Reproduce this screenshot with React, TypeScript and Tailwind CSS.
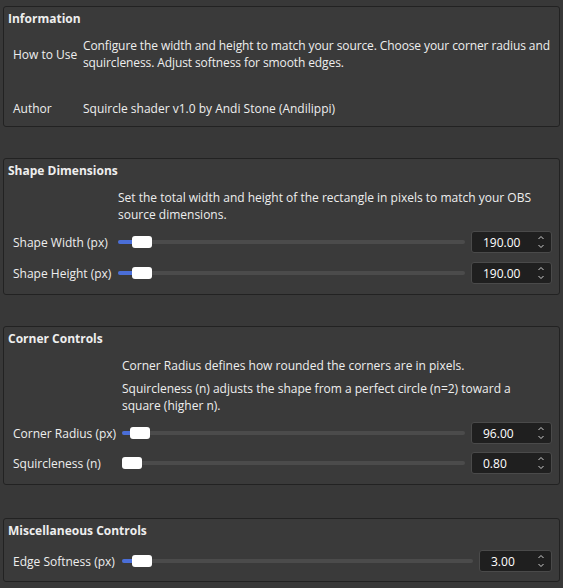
import React from "react";

function Spin({ value, w = "w-[81px]" }: { value: string; w?: string }) {
  return (
    <div className={"flex h-[22px] shrink-0 items-center justify-between rounded-[3px] border border-[#4a4a4a] bg-[#1f1f1f] pl-[11px] pr-[6px] " + w}>
      <span className="text-white">{value}</span>
      <svg width="8" height="16" viewBox="0 0 8 16" fill="none" stroke="#cfcfcf" strokeWidth="1">
        <path d="M1.5 5 L4 2.5 L6.5 5" />
        <path d="M1.5 11 L4 13.5 L6.5 11" />
      </svg>
    </div>
  );
}

function Slider({ fill }: { fill: number }) {
  return (
    <div className="relative mr-[6px] flex h-[22px] flex-1 items-center">
      <div className="h-[4px] w-full rounded-[2px] bg-[#4b4b4b]" />
      <div className="absolute left-0 top-[9px] h-[4px] rounded-l-[2px] bg-[#4a6ed8]" style={{ width: fill + 2 }} />
      <div className="absolute top-[5px] h-[12px] w-[20px] rounded-[3px] bg-white" style={{ left: fill }} />
    </div>
  );
}

function Row({ label, labelW, fill, value, spinW }: { label: string; labelW: string; fill: number; value: string; spinW?: string }) {
  return (
    <div className="flex items-center">
      <div className={labelW}>{label}</div>
      <Slider fill={fill} />
      <Spin value={value} w={spinW} />
    </div>
  );
}

function Panel({ title, className, children }: { title: string; className?: string; children: React.ReactNode }) {
  return (
    <div className={"rounded-[3px] border border-[#222222] bg-[#3a3a3a] " + (className ?? "")}>
      <div className="pl-[4px] pt-[3px] font-bold">{title}</div>
      {children}
    </div>
  );
}

export default function App() {
  return (
    <div
      className="min-h-[588px] bg-[#383838] px-[3px] pt-[6px] text-[12px] leading-[17px] text-[#eeeeee]"
      style={{ fontFamily: '"Open Sans", "Noto Sans", sans-serif' }}
    >
      <div className="flex flex-col gap-[31px]">
        <Panel title="Information" className="pb-[9px]">
          <div className="mt-[10px] flex items-center pl-[9px]">
            <div className="w-[70px] shrink-0">How to Use</div>
            <div className="whitespace-nowrap tracking-[-0.1px]">
              Configure the width and height to match your source. Choose your corner radius and
              <br />
              squircleness. Adjust softness for smooth edges.
            </div>
          </div>
          <div className="mt-[29px] flex pl-[9px]">
            <div className="w-[70px] shrink-0">Author</div>
            <div>Squircle shader v1.0 by Andi Stone (Andilippi)</div>
          </div>
        </Panel>

        <Panel title="Shape Dimensions" className="pb-[10px]">
          <div className="pl-[9px] pr-[7px]">
            <div className="mt-[10px] pl-[105px] pr-[20px]">
              Set the total width and height of the rectangle in pixels to match your OBS source dimensions.
            </div>
            <div className="mt-[8px] flex flex-col gap-[9px]">
              <Row label="Shape Width (px)" labelW="w-[105px] shrink-0" fill={14} value="190.00" />
              <Row label="Shape Height (px)" labelW="w-[105px] shrink-0" fill={14} value="190.00" />
            </div>
          </div>
        </Panel>

        <Panel title="Corner Controls" className="pb-[10px]">
          <div className="pl-[9px] pr-[7px]">
            <div className="mt-[10px] pl-[109px]">Corner Radius defines how rounded the corners are in pixels.</div>
            <div className="mt-[6px] pl-[109px] pr-[30px]">
              Squircleness (n) adjusts the shape from a perfect circle (n=2) toward a square (higher n).
            </div>
            <div className="mt-[8px] flex flex-col gap-[8px]">
              <Row label="Corner Radius (px)" labelW="w-[109px] shrink-0" fill={8} value="96.00" />
              <Row label="Squircleness (n)" labelW="w-[109px] shrink-0" fill={0} value="0.80" />
            </div>
          </div>
        </Panel>

        <Panel title="Miscellaneous Controls" className="mt-[2px] pb-[9px]">
          <div className="mt-[11px] pl-[9px] pr-[7px]">
            <Row label="Edge Softness (px)" labelW="w-[109px] shrink-0" fill={10} value="3.00" spinW="w-[73px]" />
          </div>
        </Panel>
      </div>
    </div>
  );
}
